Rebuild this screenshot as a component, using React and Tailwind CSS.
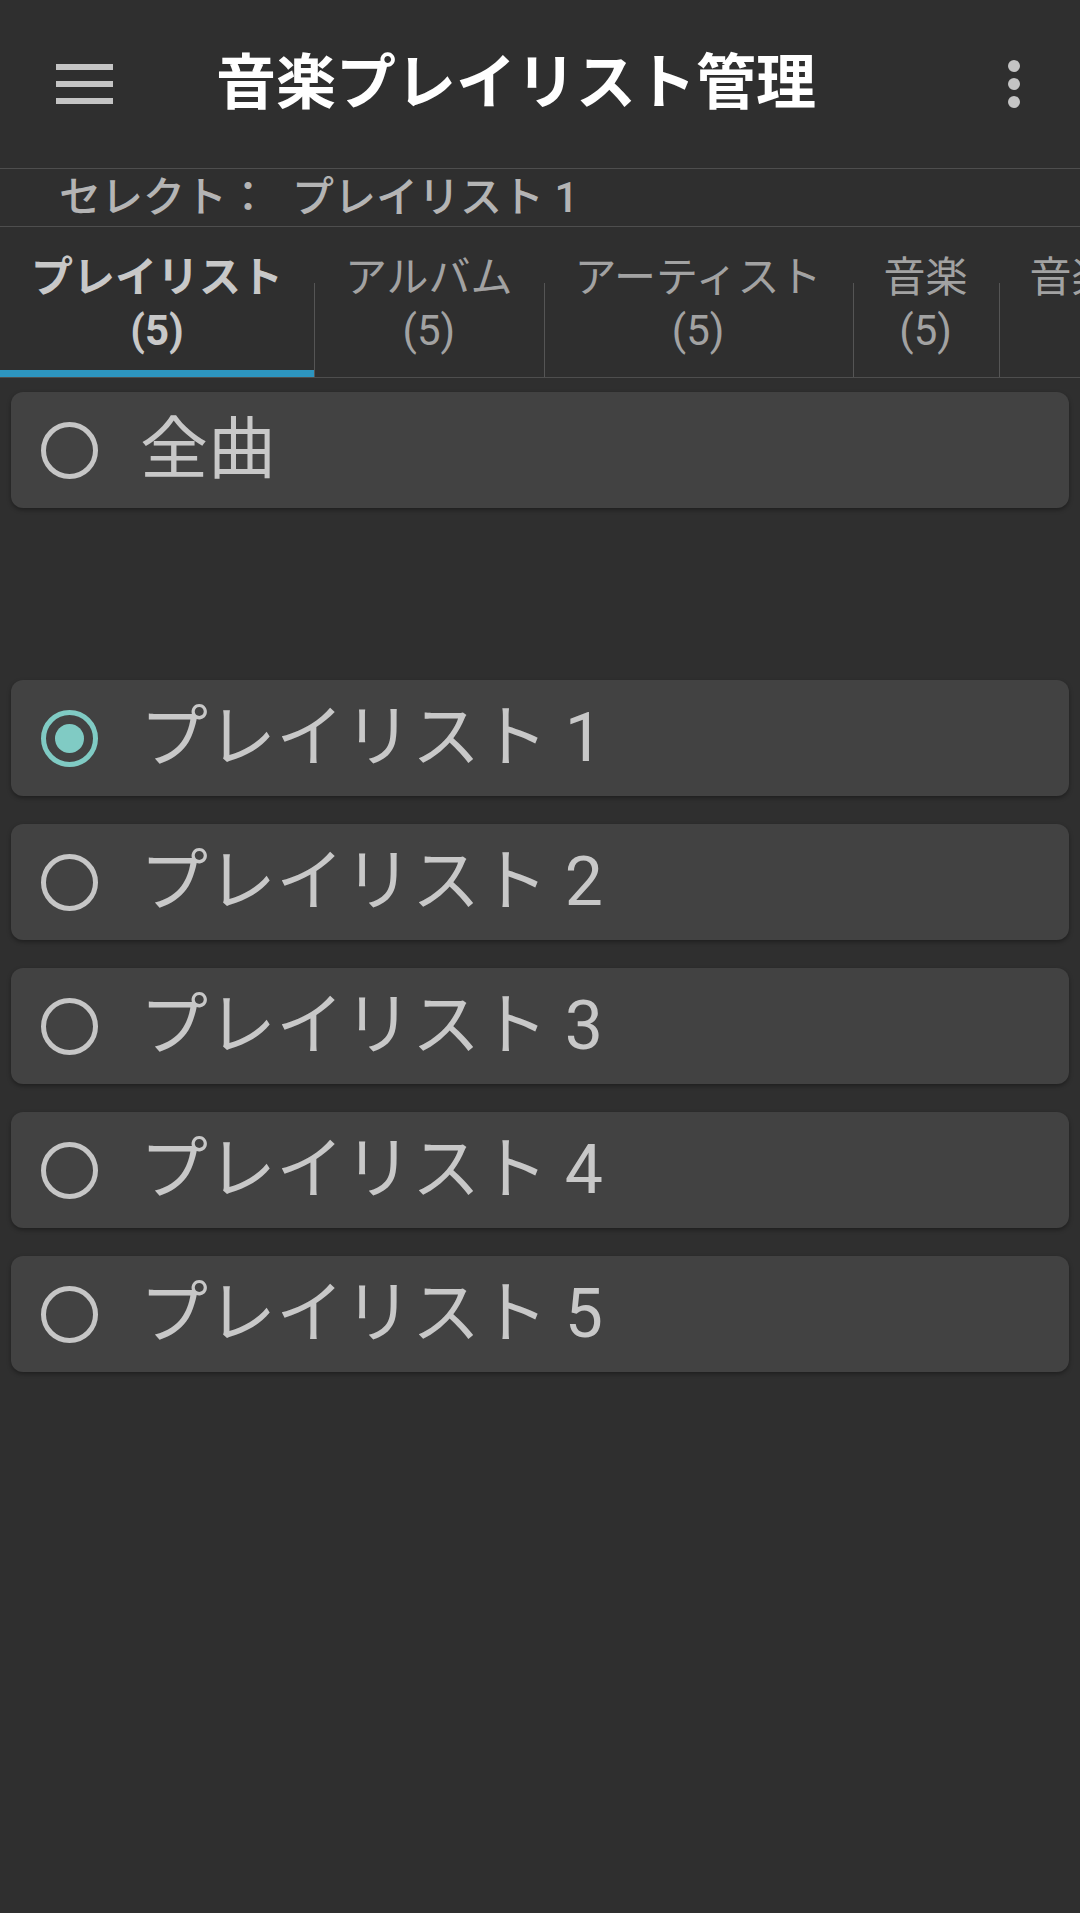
import React from 'react';

const tabs = [
  { label: 'プレイリスト', count: 5, active: true },
  { label: 'アルバム', count: 5 },
  { label: 'アーティスト', count: 5 },
  { label: '音楽', count: 5 },
  { label: '音楽フォルダ', count: 5 },
];

const playlists = ['プレイリスト 1', 'プレイリスト 2', 'プレイリスト 3', 'プレイリスト 4', 'プレイリスト 5'];

function Radio({ checked }) {
  if (checked) {
    return (
      <div className="flex h-[57px] w-[57px] shrink-0 items-center justify-center rounded-full border-[5px] border-[#80cbc4]">
        <div className="h-[29px] w-[29px] rounded-full bg-[#80cbc4]" />
      </div>
    );
  }
  return <div className="h-[57px] w-[57px] shrink-0 rounded-full border-[5px] border-[#c6c6c6]" />;
}

function Row({ label, checked }) {
  return (
    <div className="flex h-[116px] items-center rounded-[12px] bg-[#424242] pl-[30px] shadow-[0_2px_4px_rgba(0,0,0,0.35)]">
      <Radio checked={checked} />
      <span className="ml-[42px] whitespace-pre text-[68px] leading-none text-[#c8c8c8]">{label}</span>
    </div>
  );
}

export default function App() {
  return (
    <div
      className="min-h-[1913px] w-[1080px] overflow-hidden bg-[#2f2f2f]"
      style={{ fontFamily: 'Roboto, "Noto Sans CJK JP", sans-serif' }}
    >
      {/* app bar */}
      <header className="flex h-[168px] items-center pl-[56px] pr-[60px]">
        <div className="flex w-[57px] flex-col gap-[11px]">
          <div className="h-[6px] bg-[#c4c4c4]" />
          <div className="h-[6px] bg-[#c4c4c4]" />
          <div className="h-[6px] bg-[#c4c4c4]" />
        </div>
        <h1 className="ml-[103px] flex-1 text-[60px] font-bold leading-none text-white">音楽プレイリスト管理</h1>
        <div className="flex flex-col gap-[6px]">
          <div className="h-[12px] w-[12px] rounded-full bg-[#c4c4c4]" />
          <div className="h-[12px] w-[12px] rounded-full bg-[#c4c4c4]" />
          <div className="h-[12px] w-[12px] rounded-full bg-[#c4c4c4]" />
        </div>
      </header>

      {/* selection line */}
      <div className="flex h-[59px] items-center border-y border-[#4e4e4e] pl-[59px] text-[42px] font-medium leading-none text-[#b4b4b4]">
        <span>セレクト：</span>
        <span className="ml-[23px] whitespace-pre">プレイリスト 1</span>
      </div>

      {/* tabs */}
      <div className="flex h-[151px] overflow-hidden border-b border-[#4e4e4e]">
        {tabs.map((t, i) => (
          <div key={t.label} className="relative shrink-0 px-[31px] pt-[24px]">
            {i > 0 && <div className="absolute bottom-0 left-0 h-[94px] w-px bg-[#555555]" />}
            <div
              className={
                'flex flex-col items-center text-[42px] leading-[53px] ' +
                (t.active ? 'font-bold text-[#c8c8c8]' : 'text-[#a2a2a2]')
              }
            >
              <span className="whitespace-nowrap">{t.label}</span>
              <span>({t.count})</span>
            </div>
            {t.active && <div className="absolute bottom-0 left-0 right-0 h-[7px] bg-[#2d95bf]" />}
          </div>
        ))}
      </div>

      {/* list */}
      <div className="px-[11px] pt-[14px]">
        <Row label="全曲" />
        <div className="mt-[172px] flex flex-col gap-[28px]">
          {playlists.map((p, i) => (
            <Row key={p} label={p} checked={i === 0} />
          ))}
        </div>
      </div>
    </div>
  );
}
